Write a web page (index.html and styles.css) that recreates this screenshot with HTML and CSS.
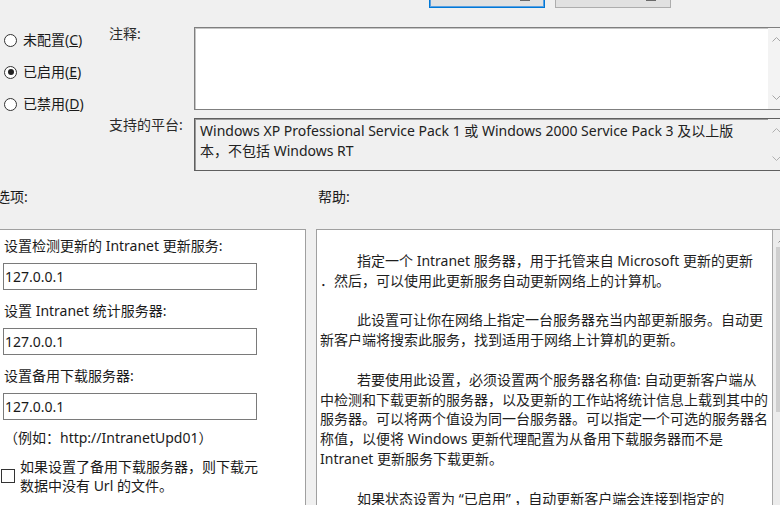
FILE: index.html
```html
<!DOCTYPE html>
<html lang="zh-CN">
<head>
<meta charset="utf-8">
<title>设置 Intranet Microsoft 更新服务位置</title>
<link rel="stylesheet" href="styles.css">
</head>
<body>
<div class="window">
  <div class="topbar">
    <div class="btn btn-primary"><span class="btn-mark"></span></div>
    <div class="btn"><span class="btn-mark"></span></div>
  </div>

  <div class="upper">
    <div class="radios">
      <div class="radio"><span class="circle"></span><span>未配置(<u>C</u>)</span></div>
      <div class="radio"><span class="circle checked"></span><span>已启用(<u>E</u>)</span></div>
      <div class="radio"><span class="circle"></span><span>已禁用(<u>D</u>)</span></div>
    </div>
    <div class="fields">
      <div class="label">注释:</div>
      <div class="comment-box">
        <div class="box-text"></div>
        <div class="vscroll vscroll-comment">
          <svg class="chev" width="9" height="5" viewBox="0 0 9 5"><polyline points="0.5,4.5 4.5,0.5 8.5,4.5" fill="none" stroke="#a6a6a6" stroke-width="1"/></svg>
          <svg class="chev" width="9" height="5" viewBox="0 0 9 5"><polyline points="0.5,0.5 4.5,4.5 8.5,0.5" fill="none" stroke="#a6a6a6" stroke-width="1"/></svg>
        </div>
      </div>
      <div class="label">支持的平台:</div>
      <div class="platform-box">
        <div class="box-text platform-text">Windows XP Professional Service Pack 1 或 Windows 2000 Service Pack 3 及以上版<br>本，不包括 Windows RT</div>
        <div class="vscroll vscroll-platform">
          <svg class="chev" width="9" height="5" viewBox="0 0 9 5"><polyline points="0.5,4.5 4.5,0.5 8.5,4.5" fill="none" stroke="#b0b0b0" stroke-width="1"/></svg>
          <svg class="chev" width="9" height="5" viewBox="0 0 9 5"><polyline points="0.5,0.5 4.5,4.5 8.5,0.5" fill="none" stroke="#b0b0b0" stroke-width="1"/></svg>
        </div>
      </div>
    </div>
  </div>

  <div class="heads">
    <div class="head-options">选项:</div>
    <div class="head-help">帮助:</div>
  </div>

  <div class="panels">
    <div class="options-panel">
      <div class="opt-label first">设置检测更新的 Intranet 更新服务:</div>
      <div class="input">127.0.0.1</div>
      <div class="opt-label">设置 Intranet 统计服务器:</div>
      <div class="input">127.0.0.1</div>
      <div class="opt-label">设置备用下载服务器:</div>
      <div class="input">127.0.0.1</div>
      <div class="example">（例如：http://IntranetUpd01）</div>
      <div class="check-row">
        <span class="checkbox"></span>
        <span class="check-text">如果设置了备用下载服务器，则下载元<br>数据中没有 Url 的文件。</span>
      </div>
    </div>
    <div class="help-panel">
      <div class="help-text">
        <p>指定一个 Intranet 服务器，用于托管来自 Microsoft 更新的更新<br>．然后，可以使用此更新服务自动更新网络上的计算机。</p>
        <p>此设置可让你在网络上指定一台服务器充当内部更新服务。自动更<br>新客户端将搜索此服务，找到适用于网络上计算机的更新。</p>
        <p>若要使用此设置，必须设置两个服务器名称值: 自动更新客户端从<br>中检测和下载更新的服务器，以及更新的工作站将统计信息上载到其中的<br>服务器。可以将两个值设为同一台服务器。可以指定一个可选的服务器名<br>称值，以便将 Windows 更新代理配置为从备用下载服务器而不是<br>Intranet 更新服务下载更新。</p>
        <p>如果状态设置为 “已启用” ，自动更新客户端会连接到指定的</p>
      </div>
      <div class="help-scroll">
        <svg class="chev" width="7" height="4" viewBox="0 0 7 4"><polyline points="0.5,3.5 3.5,0.5 6.5,3.5" fill="none" stroke="#8a8a8a" stroke-width="1"/></svg>
        <div class="thumb"></div>
      </div>
    </div>
  </div>
</div>
</body>
</html>
```

FILE: styles.css
```css
* { box-sizing: border-box; }

html, body {
  margin: 0;
  padding: 0;
  background: #f0f0f0;
}

body {
  font-family: "Noto Sans", "Noto Sans CJK SC", sans-serif;
  font-size: 14px;
  color: #1a1a1a;
}

.window {
  width: 780px;
  height: 505px;
  overflow: hidden;
  background: #f0f0f0;
}

/* top buttons (mostly scrolled off) */
.topbar {
  height: 8px;
  display: flex;
  justify-content: flex-end;
  align-items: flex-end;
  gap: 10px;
  padding-right: 109px;
}

.btn {
  flex: 0 0 116px;
  height: 24px;
  background: #e1e1e1;
  border: 1px solid #adadad;
  display: flex;
  justify-content: flex-end;
  align-items: flex-end;
  padding: 0 14px 6px 0;
}

.btn-primary {
  border: 1px solid #0078d7;
  box-shadow: inset 0 0 0 1px #5aa0e0;
}

.btn-mark {
  display: block;
  width: 10px;
  height: 2px;
  background: #6a6a6a;
}

/* upper area */
.upper {
  display: flex;
}

.radios {
  flex: 0 0 105px;
  padding: 22px 0 0 4px;
  display: flex;
  flex-direction: column;
  gap: 12px;
}

.radio {
  display: flex;
  align-items: center;
  gap: 6px;
  height: 20px;
  line-height: 20px;
  white-space: nowrap;
}

.circle {
  width: 13px;
  height: 13px;
  border: 1px solid #333;
  border-radius: 50%;
  background: #fff;
  display: flex;
  align-items: center;
  justify-content: center;
  flex-shrink: 0;
}

.circle.checked::after {
  content: "";
  width: 6px;
  height: 6px;
  border-radius: 50%;
  background: #222;
}

.fields {
  margin-top: 19px;
  display: grid;
  grid-template-columns: 89px 592px;
  row-gap: 8px;
}

.label {
  padding-left: 4px;
  line-height: 14px;
  white-space: nowrap;
  color: #2a2a2a;
}

.comment-box {
  height: 83px;
  background: #fff;
  border: 1px solid #7f7f7f;
  box-shadow: inset 1px 1px 0 #c6c6c6;
  display: flex;
}

.platform-box {
  height: 53px;
  background: #f0f0f0;
  border: 1px solid #5f5f5f;
  box-shadow: inset 1px 1px 0 #9a9a9a;
  display: flex;
}

.box-text {
  flex: 1;
}

.platform-text {
  padding: 2px 0 0 5px;
  line-height: 20px;
  white-space: nowrap;
  color: #222;
}

.vscroll {
  flex: 0 0 17px;
  display: flex;
  flex-direction: column;
  justify-content: space-between;
  align-items: center;
  padding: 9px 0;
}

.vscroll-comment {
  background: #f3f3f3;
}

.vscroll-platform {
  background: #f0f0f0;
}

.chev {
  display: block;
}

/* section headers */
.heads {
  margin-top: 16px;
  display: flex;
  line-height: 20px;
  height: 20px;
}

.head-options {
  flex: 0 0 322px;
  margin-left: -4px;
}

/* panels */
.panels {
  margin-top: 22px;
  display: flex;
  gap: 10px;
  height: 300px;
}

.options-panel {
  flex: 0 0 308px;
  margin-left: -2px;
  background: #fff;
  border: 1px solid #a0a0a0;
  padding: 6px 0 0 5px;
}

.opt-label {
  line-height: 20px;
  margin-top: 11px;
  white-space: nowrap;
}

.opt-label.first {
  margin-top: 0;
}

.input {
  margin-top: 7px;
  margin-left: -1px;
  width: 254px;
  height: 27px;
  border: 1px solid #7a7a7a;
  background: #fff;
  padding-left: 1px;
  line-height: 25px;
}

.example {
  margin-top: 8px;
  line-height: 20px;
  white-space: nowrap;
}

.check-row {
  margin-top: 9px;
  margin-left: -3px;
  display: flex;
  align-items: center;
  gap: 5px;
}

.checkbox {
  width: 14px;
  height: 14px;
  border: 1px solid #333;
  background: #fff;
  flex-shrink: 0;
}

.check-text {
  line-height: 19px;
  white-space: nowrap;
}

.help-panel {
  flex: 0 0 480px;
  background: #fff;
  border: 1px solid #a0a0a0;
  display: flex;
}

.help-text {
  flex: 0 0 456px;
  border-right: 1px solid #a8a8a8;
  padding: 21px 0 0 3px;
  line-height: 19.8px;
  white-space: nowrap;
  color: #1e1e1e;
}

.help-text p {
  margin: 0 0 19.8px 0;
  text-indent: 37px;
}

.help-scroll {
  flex: 0 0 17px;
  background: #ececec;
  display: flex;
  flex-direction: column;
  align-items: center;
  padding-top: 9px;
  gap: 4px;
}

.thumb {
  align-self: flex-end;
  margin-right: 8px;
  width: 6px;
  height: 165px;
  background: #cfcfcf;
}
```
